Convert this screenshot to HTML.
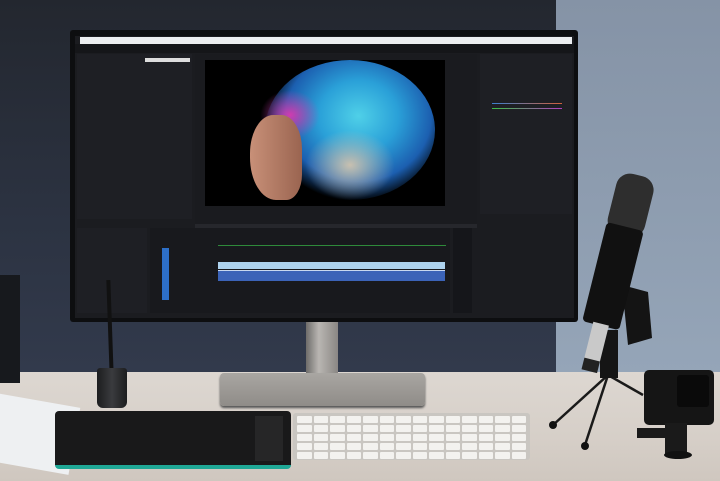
<!DOCTYPE html>
<html><head><meta charset="utf-8"><style>
*{margin:0;padding:0;box-sizing:border-box}
body{width:720px;height:481px;overflow:hidden;position:relative;background:#d9d3cd;font-family:"Liberation Sans",sans-serif}
.a{position:absolute}
</style></head><body>
<div class="a" style="left:0;top:0;width:556px;height:373px;background:linear-gradient(180deg,#23272f 0%,#2c3342 60%,#323a4c 100%)"></div>
<div class="a" style="left:556px;top:0;width:164px;height:373px;background:linear-gradient(180deg,#8593a6,#95a5b8)"></div>
<div class="a" style="left:0;top:372px;width:720px;height:109px;background:linear-gradient(180deg,#ddd7d1,#d6cfc8 60%,#cfc7bf)"></div>
<div class="a" style="left:0;top:275px;width:20px;height:108px;background:#17191d"></div>
<div class="a" style="left:-10px;top:400px;width:85px;height:68px;background:#eef0f2;transform:rotate(10deg)"></div>
<div class="a" style="left:306px;top:318px;width:32px;height:62px;background:linear-gradient(90deg,#6e6c6a,#b9b6b2 40%,#8a8784)"></div>
<div class="a" style="left:220px;top:373px;width:205px;height:33px;border-radius:4px;background:linear-gradient(180deg,#a9a6a2,#8f8c88);box-shadow:0 2px 2px #555"></div>
<div class="a" style="left:70px;top:30px;width:508px;height:292px;background:#0d0e10;border-radius:3px"></div>
<div class="a" style="left:75px;top:36px;width:499px;height:282px;background:#1b1c20"></div>
<div class="a" style="left:80px;top:37px;width:492px;height:7px;background:#eceef0"></div>
<div class="a" style="left:75px;top:44px;width:499px;height:9px;background:#151619"></div>
<div class="a" style="left:77px;top:54px;width:115px;height:165px;background:#1e1f24"></div>
<div class="a" style="left:145px;top:58px;width:45px;height:4px;background:#ddd"></div>
<div class="a" style="left:195px;top:54px;width:282px;height:170px;background:#1a1b1f"></div>
<div class="a" style="left:480px;top:54px;width:92px;height:160px;background:#1e1f24"></div>
<div class="a" style="left:492px;top:103px;width:70px;height:1px;background:linear-gradient(90deg,#3a7fd0,#d0603a)"></div>
<div class="a" style="left:492px;top:108px;width:70px;height:1px;background:linear-gradient(90deg,#3bbf45,#b03fc0)"></div>
<div class="a" style="left:205px;top:60px;width:240px;height:146px;background:#000;overflow:hidden">
 <div class="a" style="left:60px;top:0;width:170px;height:140px;border-radius:50%;background:radial-gradient(ellipse at 55% 40%,#4fd0e8 0%,#2aa0d8 30%,#1c5fb0 55%,rgba(20,40,80,0) 72%)"></div>
 <div class="a" style="left:55px;top:30px;width:60px;height:50px;border-radius:50%;background:radial-gradient(#d03cb0,rgba(160,40,150,0) 70%)"></div>
 <div class="a" style="left:100px;top:70px;width:90px;height:70px;border-radius:50%;background:radial-gradient(#c8c0b0,rgba(150,140,120,0) 70%)"></div>
 <div class="a" style="left:45px;top:55px;width:52px;height:85px;border-radius:45% 40% 30% 50%;background:linear-gradient(90deg,#c89078,#9a6450)"></div>
</div>
<div class="a" style="left:195px;top:224px;width:282px;height:4px;background:#26272c"></div>
<div class="a" style="left:77px;top:228px;width:70px;height:85px;background:#1e1f24"></div>
<div class="a" style="left:150px;top:228px;width:300px;height:85px;background:#18191d"></div>
<div class="a" style="left:218px;top:245px;width:228px;height:1px;background:#2e8a3a"></div>
<div class="a" style="left:162px;top:248px;width:7px;height:52px;background:#2d6fc8"></div>
<div class="a" style="left:218px;top:262px;width:227px;height:7px;background:#aed3ef"></div>
<div class="a" style="left:218px;top:270px;width:227px;height:11px;background:#3b63b8;border-top:1px solid #c8d8f0"></div>
<div class="a" style="left:453px;top:228px;width:19px;height:85px;background:#15161a"></div>
<div class="a" style="left:108px;top:280px;width:4px;height:95px;background:#111;transform:rotate(-2deg)"></div>
<div class="a" style="left:97px;top:368px;width:30px;height:40px;border-radius:3px 3px 6px 6px;background:linear-gradient(90deg,#1c1d1f,#3a3b3e,#1c1d1f)"></div>
<div class="a" style="left:55px;top:411px;width:236px;height:58px;border-radius:4px;background:#19191a;border-bottom:4px solid #1fa896"></div>
<div class="a" style="left:255px;top:416px;width:28px;height:45px;background:#262627"></div>
<div class="a" style="left:293px;top:413px;width:237px;height:47px;border-radius:3px;background:#c9c6c1;padding:3px 4px;display:grid;grid-template-columns:repeat(14,1fr);grid-auto-rows:7px;gap:2px">
<script>document.write('<i style="background:#f3f2ef;border-radius:1px"></i>'.repeat(70))</script>
</div>
<svg class="a" style="left:0;top:0" width="720" height="481">
 <g stroke="#1a1a1a" stroke-width="2.5"><line x1="608" y1="375" x2="553" y2="425"/><line x1="608" y1="375" x2="585" y2="445"/><line x1="608" y1="375" x2="643" y2="395"/></g>
 <circle cx="553" cy="425" r="4" fill="#111"/><circle cx="585" cy="446" r="4" fill="#111"/>
 <rect x="600" y="330" width="18" height="48" fill="#151515"/>
 <path d="M622 285 L648 292 L652 338 L628 345 Z" fill="#141414"/>
 <g transform="rotate(14 612 280)">
  <rect x="593" y="172" width="38" height="62" rx="14" fill="#2e2e2e"/>
  <rect x="593" y="225" width="38" height="102" rx="4" fill="#111"/>
  <rect x="604" y="325" width="16" height="40" fill="#c9c9c9"/>
  <rect x="604" y="362" width="16" height="12" fill="#222"/>
 </g>
 <rect x="644" y="370" width="70" height="55" rx="5" fill="#151515"/>
 <rect x="677" y="375" width="32" height="32" rx="3" fill="#0a0a0a"/>
 <rect x="665" y="423" width="22" height="32" fill="#1a1a1a"/>
 <rect x="637" y="428" width="30" height="10" fill="#1a1a1a"/>
 <ellipse cx="678" cy="455" rx="14" ry="4" fill="#111"/>
</svg>
</body></html>
